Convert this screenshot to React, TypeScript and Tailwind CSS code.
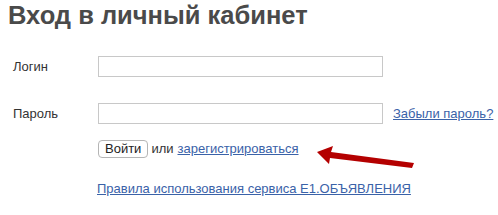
import React from "react";

export default function App() {
  return (
    <div className="relative w-[498px] h-[215px] bg-white font-['Liberation_Sans',Arial,sans-serif] text-[13px] text-[#333]">
      <h1 className="pl-[8px] pt-[1px] text-[25.5px] leading-[28px] font-bold text-[#4a4a4a]">
        Вход в личный кабинет
      </h1>
      <div className="pl-[13px] pt-[27px]">
        <div className="flex items-center h-[21px]">
          <label className="w-[85px]">Логин</label>
          <input className="w-[285px] h-[21px] border border-[#c8c8c8] bg-white outline-none" />
        </div>
        <div className="flex items-center h-[21px] mt-[26px]">
          <label className="w-[85px]">Пароль</label>
          <input type="password" className="w-[285px] h-[21px] border border-[#c8c8c8] bg-white outline-none" />
          <a href="#" className="ml-[10px] text-[#3a62a8] underline">Забыли пароль?</a>
        </div>
        <div className="flex items-center mt-[15px] pl-[85px]">
          <button className="h-[18px] px-[6px] border border-[#b5b5b5] rounded-[4px] bg-white text-[13px] leading-[16px] text-[#222]">
            Войти
          </button>
          <span className="ml-[3px]">или</span>
          <a href="#" className="ml-[4px] text-[#3a62a8] underline">зарегистрироваться</a>
        </div>
        <div className="mt-[20px] pl-[84px]">
          <a href="#" className="text-[#3a62a8] underline">Правила использования сервиса E1.ОБЪЯВЛЕНИЯ</a>
        </div>
      </div>
      <svg className="absolute left-[316px] top-[146px]" width="100" height="26" viewBox="0 0 100 26">
        <polygon points="1,6 17,0 15,6 98,17 96,22 14,12 13,18" fill="#b40000" />
      </svg>
    </div>
  );
}
